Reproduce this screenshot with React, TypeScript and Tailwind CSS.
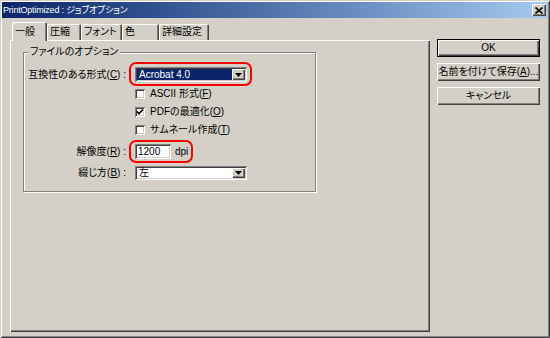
const ui = "font-['Liberation_Sans','Noto_Sans_CJK_JP',sans-serif] [font-feature-settings:'palt']";

const raised = 'shadow-[inset_1px_1px_0_#fff,inset_-1px_-1px_0_#404040,inset_-2px_-2px_0_#808080]';
const sunken = 'shadow-[inset_1px_1px_0_#808080,inset_-1px_-1px_0_#fff,inset_2px_2px_0_#404040,inset_-2px_-2px_0_#d4d0c8]';

const tabs = [
  { label: '一般', w: 'w-[35px]', active: true },
  { label: '圧縮', w: 'w-[34px]' },
  { label: 'フォント', w: 'w-[41px]' },
  { label: '色', w: 'w-[37px]' },
  { label: '詳細設定', w: 'w-[50px]' },
];

function DropButton() {
  return (
    <div className="w-[13px] h-full bg-[#d4d0c8] flex items-center justify-center shadow-[inset_1px_1px_0_#fff,inset_-1px_-1px_0_#404040,inset_-2px_-2px_0_#808080]">
      <svg width="7" height="4" viewBox="0 0 7 4">
        <path d="M0 0h7L3.5 4z" fill="#000" />
      </svg>
    </div>
  );
}

function Checkbox({ label, checked }: { label: React.ReactNode; checked?: boolean }) {
  return (
    <div className="flex items-center h-[14px] pl-[111px]">
      <div className={`w-[10px] h-[10px] bg-white flex items-center justify-center ${sunken}`}>
        {checked && (
          <svg width="8" height="8" viewBox="0 0 8 8">
            <path d="M1 3.5L3 5.5L7 1.5" stroke="#000" strokeWidth="1.6" fill="none" />
          </svg>
        )}
      </div>
      <span className="ml-[5px] leading-none">{label}</span>
    </div>
  );
}

function Label({ children }: { children: React.ReactNode }) {
  return <span className="w-[102px] text-right shrink-0 leading-none">{children}</span>;
}

function Button({ children, isDefault }: { children: React.ReactNode; isDefault?: boolean }) {
  return (
    <div
      className={`h-[18px] flex items-center justify-center leading-none ${
        isDefault
          ? 'border border-black shadow-[inset_1px_1px_0_#fff,inset_-1px_-1px_0_#404040,inset_-2px_-2px_0_#808080]'
          : raised
      }`}
    >
      {children}
    </div>
  );
}

export default function App() {
  return (
    <div
      className={`${ui} text-[10px] text-black w-[550px] h-[338px] bg-[#d4d0c8] p-[2px] flex flex-col shadow-[inset_1px_1px_0_#d4d0c8,inset_-1px_-1px_0_#404040,inset_2px_2px_0_#fff,inset_-2px_-2px_0_#808080]`}
    >
      {/* title bar */}
      <div className="h-[16px] shrink-0 flex items-center justify-between pl-[1px] pr-[2px] bg-linear-to-r from-[#0a246a] to-[#a6caf0]">
        <span className="text-white text-[9px] tracking-[-0.2px] leading-none">PrintOptimized : ジョブオプション</span>
        <div className={`w-[14px] h-[12px] bg-[#d4d0c8] flex items-center justify-center ${raised}`}>
          <svg width="8" height="7" viewBox="0 0 8 7">
            <path d="M0.5 0.5L7.5 6.5M7.5 0.5L0.5 6.5" stroke="#000" strokeWidth="1.6" />
          </svg>
        </div>
      </div>

      <div className="flex flex-1 min-h-0">
        {/* tabs + panel */}
        <div className="flex flex-col w-[420px] ml-[8px] mt-[4px] mb-[4px]">
          <div className="flex items-end h-[18px] pl-[2px]">
            {tabs.map((t) => (
              <div
                key={t.label}
                className={`${t.w} flex items-center pl-[3px] rounded-t-[2px] bg-[#d4d0c8] leading-none shadow-[inset_1px_1px_0_#fff,inset_-1px_0_0_#404040,inset_-2px_0_0_#808080] ${
                  t.active ? 'h-[19px] -mb-[1px] relative z-10' : 'h-[16px]'
                }`}
              >
                {t.label}
              </div>
            ))}
          </div>
          <div className="flex-1 pl-[13px] pt-[5px] shadow-[inset_1px_1px_0_#fff,inset_-1px_-1px_0_#404040,inset_-2px_-2px_0_#808080]">
            <fieldset className="w-[293px] h-[147px] border border-[#808080] shadow-[inset_1px_1px_0_#fff,1px_1px_0_#fff]">
              <legend className="ml-[4px] px-[2px] bg-[#d4d0c8] leading-[14px]">ファイルのオプション</legend>

              <div className="flex items-center h-[15px] mt-[8px]">
                <Label>
                  互換性のある形式(<u>C</u>) :
                </Label>
                <div className="relative ml-[9px]">
                  <div className={`w-[112px] h-[15px] bg-white p-[2px] flex ${sunken}`}>
                    <div className="flex-1 bg-[#0a246a] text-white flex items-center pl-[2px] leading-none">Acrobat 4.0</div>
                    <DropButton />
                  </div>
                  <span className="absolute -left-[6px] -right-[5px] -top-[5px] -bottom-[4px] border-2 border-[#f00] rounded-[7px] pointer-events-none" />
                </div>
              </div>

              <div className="flex flex-col gap-[4px] mt-[5px]">
                <Checkbox label={<>ASCII 形式(<u>F</u>)</>} />
                <Checkbox label={<>PDFの最適化(<u>O</u>)</>} checked />
                <Checkbox label={<>サムネール作成(<u>T</u>)</>} />
              </div>

              <div className="flex items-center h-[15px] mt-[7px]">
                <Label>
                  解像度(<u>R</u>) :
                </Label>
                <div className="relative ml-[9px] flex items-center">
                  <div className={`w-[36px] h-[15px] bg-white flex items-center pl-[3px] leading-none ${sunken}`}>1200</div>
                  <span className="ml-[4px] leading-none">dpi</span>
                  <span className="absolute -left-[6px] -right-[5px] -top-[4px] -bottom-[4px] border-2 border-[#f00] rounded-[7px] pointer-events-none" />
                </div>
              </div>

              <div className="flex items-center h-[14px] mt-[7px]">
                <Label>
                  綴じ方(<u>B</u>) :
                </Label>
                <div className={`ml-[9px] w-[112px] h-[14px] bg-white p-[2px] flex ${sunken}`}>
                  <div className="flex-1 flex items-center pl-[2px] leading-none">左</div>
                  <DropButton />
                </div>
              </div>
            </fieldset>
          </div>
        </div>

        {/* buttons */}
        <div className="flex flex-col w-[103px] ml-[7px] mt-[21px] gap-[6px]">
          <Button isDefault>OK</Button>
          <Button>
            名前を付けて保存(<u>A</u>)...
          </Button>
          <Button>キャンセル</Button>
        </div>
      </div>
    </div>
  );
}
